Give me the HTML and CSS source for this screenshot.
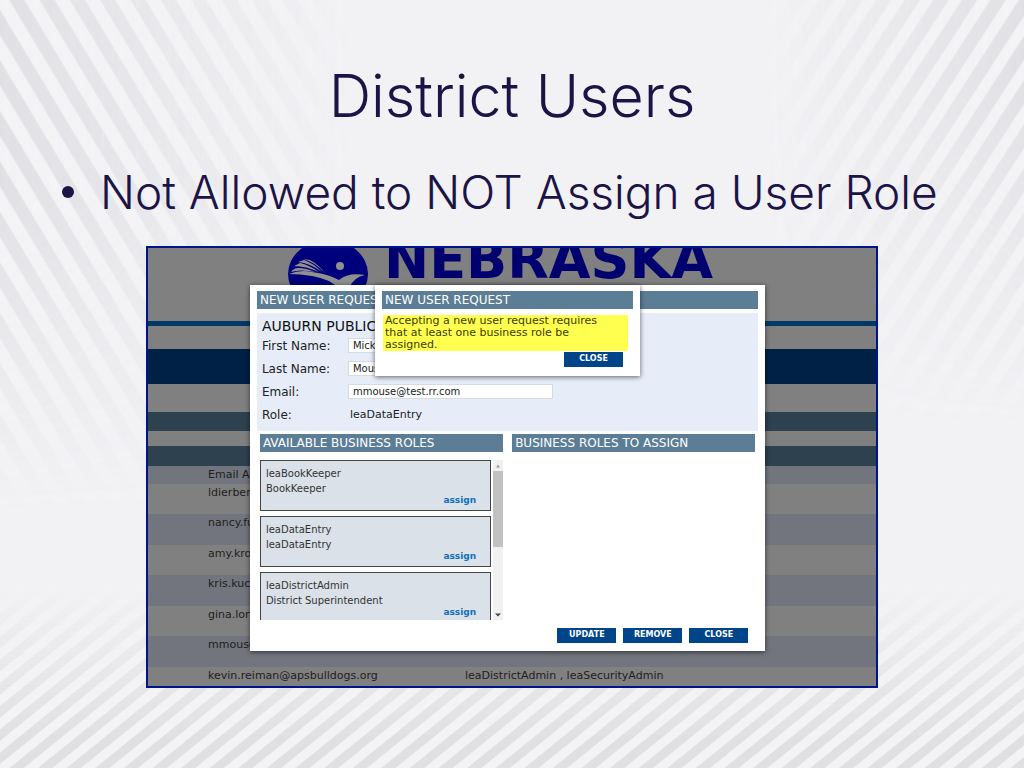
FILE: index.html
```html
<!DOCTYPE html>
<html lang="en">
<head>
<meta charset="utf-8">
<title>District Users</title>
<link rel="stylesheet" href="styles.css">
</head>
<body>
<main class="slide">
  <div class="stripes stripes-left"></div>
  <div class="stripes stripes-right"></div>
  <div class="stripes stripes-bottom"></div>
  <h1 class="title">District Users</h1>
  <ul class="points"><li>Not Allowed to NOT Assign a User Role</li></ul>

  <section class="shot">
    <div class="page">
      <header class="banner">
        <svg class="logo" viewBox="0 0 80 68" width="80" height="68" aria-hidden="true">
          <ellipse cx="40" cy="34" rx="40" ry="34" fill="#00007c"/>
          <path d="M1 34Q13 29 24 32Q40 34 51 40Q60 32 77 35Q66 37 61 48L50 48Q42 39 24 36Q12 34 1 34Z" fill="#909090"/>
          <path d="M3 32Q6 28 10 28Q18 28 27 32Q12 29 3 32ZM6 26L12 23Q21 25 31 32Q18 26 6 26ZM10 22L16 20Q25 23 34 32Q22 23 10 22ZM15 19L22 20Q31 25 37 33Q27 22 15 19Z" fill="#909090"/>
          <circle cx="52" cy="26" r="4" fill="#909090"/>
        </svg>
        <span class="wordmark">NEBRASKA</span>
      </header>
      <div class="rule"></div>
      <div class="navbar"></div>
      <div class="bar"></div>
      <div class="bar bar-last"></div>
      <table class="users">
        <thead><tr><th>Email Ad</th><th></th></tr></thead>
        <tbody>
          <tr><td>ldierberg</td><td></td></tr>
          <tr><td>nancy.fu</td><td></td></tr>
          <tr><td>amy.kro</td><td></td></tr>
          <tr><td>kris.kuc</td><td></td></tr>
          <tr><td>gina.lon</td><td></td></tr>
          <tr><td>mmouse</td><td></td></tr>
          <tr><td>kevin.reiman@apsbulldogs.org</td><td>leaDistrictAdmin , leaSecurityAdmin</td></tr>
        </tbody>
      </table>
    </div>

    <section class="dialog request">
      <h2 class="heading">NEW USER REQUEST</h2>
      <form class="details">
        <h3 class="district">AUBURN PUBLIC</h3>
        <div class="field"><label for="first">First Name:</label><input id="first" value="Mickey"></div>
        <div class="field"><label for="last">Last Name:</label><input id="last" value="Mouse"></div>
        <div class="field"><label for="email">Email:</label><input id="email" value="mmouse@test.rr.com"></div>
        <div class="field"><span>Role:</span><span class="value">leaDataEntry</span></div>
      </form>
      <div class="columns">
        <section>
          <h2 class="heading">AVAILABLE BUSINESS ROLES</h2>
          <div class="roles">
            <div class="cards">
              <article class="card"><p>leaBookKeeper</p><p>BookKeeper</p><a href="#">assign</a></article>
              <article class="card"><p>leaDataEntry</p><p>leaDataEntry</p><a href="#">assign</a></article>
              <article class="card"><p>leaDistrictAdmin</p><p>District Superintendent</p><a href="#">assign</a></article>
            </div>
            <div class="scrollbar">
              <svg viewBox="0 0 10 10" width="10" height="11"><path d="M3 7L5 4L7 7Z" fill="#999"/></svg>
              <div class="thumb"></div>
              <svg class="down" viewBox="0 0 10 10" width="10" height="11"><path d="M2 4L5 7L8 4Z" fill="#444"/></svg>
            </div>
          </div>
        </section>
        <section><h2 class="heading">BUSINESS ROLES TO ASSIGN</h2></section>
      </div>
      <div class="actions">
        <button>UPDATE</button><button>REMOVE</button><button>CLOSE</button>
      </div>
    </section>

    <section class="dialog alert">
      <h2 class="heading">NEW USER REQUEST</h2>
      <p class="message">Accepting a new user request requires that at least one business role be assigned.</p>
      <div class="actions"><button>CLOSE</button></div>
    </section>
  </section>
</main>
</body>
</html>
```
FILE: styles.css
```css
* { box-sizing: border-box; }
body, h1, h2, h3, p, ul { margin: 0; }
body { background: #f2f2f5; font-family: "DejaVu Sans", sans-serif; }

.slide {
  position: relative;
  min-height: 100vh;
  padding: 56px 146px 80px;
  overflow: hidden;
}
.stripes { position: absolute; mask-composite: intersect; opacity: .85; }
.stripes-left {
  inset: 0 64% 30% 0;
  background: repeating-linear-gradient(59deg, #dedee2 0 11px, #f4f4f6 13px 24px, #dedee2 26px);
  mask-image: linear-gradient(90deg, #000, transparent 95%), linear-gradient(#000 35%, transparent 95%);
}
.stripes-right {
  inset: 0 0 35% 72%;
  background: repeating-linear-gradient(-57deg, #dedee2 0 11px, #f4f4f6 13px 22px, #dedee2 24px);
  mask-image: linear-gradient(-90deg, #000, transparent 90%), linear-gradient(#000 15%, transparent 85%);
}
.stripes-bottom {
  inset: 72% 0 0 0;
  background: repeating-linear-gradient(-39deg, #dedee0 0 8px, #f4f4f6 9px 17px, #dedee0 18px);
  mask-image: linear-gradient(transparent 15%, #000 85%);
}

.title, .points {
  position: relative;
  color: #1c1346;
  font-family: Inter, sans-serif;
  font-weight: 300;
  white-space: nowrap;
}
.title { font-size: 59px; line-height: 80px; text-align: center; }
.points {
  margin: 26px -100px 0 -46px;
  padding: 0;
  list-style: none;
  font-size: 46px;
  line-height: 60px;
}
.points li { display: flex; align-items: center; gap: 26px; margin-left: -38px; }
.points li::before { content: ""; width: 12px; height: 12px; border-radius: 50%; background: #1c1346; }

.shot {
  position: relative;
  margin-top: 24px;
  border: 2px solid #00148c;
  overflow: hidden;
  font-size: 10px;
}
.page { background: #808080; color: #202020; }
.banner { display: flex; height: 73px; padding-left: 140px; gap: 16px; }
.logo { flex: none; margin-top: -8px; }
.wordmark { margin-top: -15px; font-size: 54px; font-weight: 700; line-height: 54px; color: #00006e; }
.rule { height: 5px; background: #003866; }
.navbar { height: 35px; margin: 23px 0 28px; background: #002146; }
.bar { height: 19px; background: #2e414e; }
.bar-last { margin-top: 15px; height: 20px; }
.users { width: 100%; border-collapse: collapse; table-layout: fixed; font-size: 11px; }
.users th, .users td { padding: 3px 0 0 60px; text-align: left; vertical-align: top; font-weight: 400; line-height: 12px; }
.users th:first-child { width: 317px; }
.users td:nth-child(2) { padding-left: 0; }
.users thead tr { height: 18px; background: #72757e; }
.users tbody tr { height: 30px; }
.users tbody tr:nth-child(even) { height: 31px; background: #72757e; }
.users tbody tr:last-child { height: 19px; }

.dialog { position: absolute; background: #fff; box-shadow: 0 1px 5px rgba(0, 0, 0, .6); padding: 6px 7px; }
.request { top: 37px; left: 14%; right: 15.2%; height: 366px; }
.alert { top: 37px; left: 227px; width: 265px; height: 91px; }
.heading { padding-left: 3px; background: #5c7d96; color: #fff; font-size: 12px; font-weight: 400; line-height: 18px; height: 18px; }

.details { margin-top: 4px; height: 118px; padding: 6px 5px; background: #e6ecf8; }
.district { font-size: 14px; font-weight: 400; line-height: 15px; color: #111; white-space: nowrap; }
.field { display: grid; grid-template-columns: 86px 1fr; align-items: center; height: 23px; font-size: 12px; color: #222; }
.field input { width: 205px; height: 15px; padding: 0 4px; border: 1px solid #d6dae2; background: #fff; color: #222; font: 10px "DejaVu Sans", sans-serif; }
.value { padding-left: 2px; font-size: 11px; }

.columns { display: grid; grid-template-columns: 1fr 1fr; gap: 9px; margin: 3px 3px 0; }
.roles { display: flex; gap: 2px; height: 160px; margin-top: 8px; overflow: hidden; }
.cards { flex: 1; display: flex; flex-direction: column; gap: 5px; }
.card { flex: none; display: flex; flex-direction: column; height: 51px; padding: 5px 14px 5px 5px; border: 1px solid #444; background: #dae1e8; color: #333; line-height: 15px; }
.card a { align-self: flex-end; color: #1470b8; font-size: 9px; font-weight: 700; line-height: 8px; text-decoration: none; }
.scrollbar { display: flex; flex-direction: column; width: 10px; background: #f1f1f1; }
.thumb { height: 76px; background: #c1c1c1; }
.down { margin-top: auto; }

.actions { display: flex; justify-content: flex-end; gap: 7px; margin: 8px 10px 0 0; }
.actions button { width: 59px; height: 15px; padding: 0 0 2px; border: 0; background: #00448a; color: #fff; font: 700 8px/13px "DejaVu Sans", sans-serif; }
.message { margin: 6px 5px 0 1px; padding: 0 16px 0 2px; background: #ffff50; color: #3c3c00; font-size: 11px; line-height: 12px; }
.alert .actions { margin-top: 1px; }
```
